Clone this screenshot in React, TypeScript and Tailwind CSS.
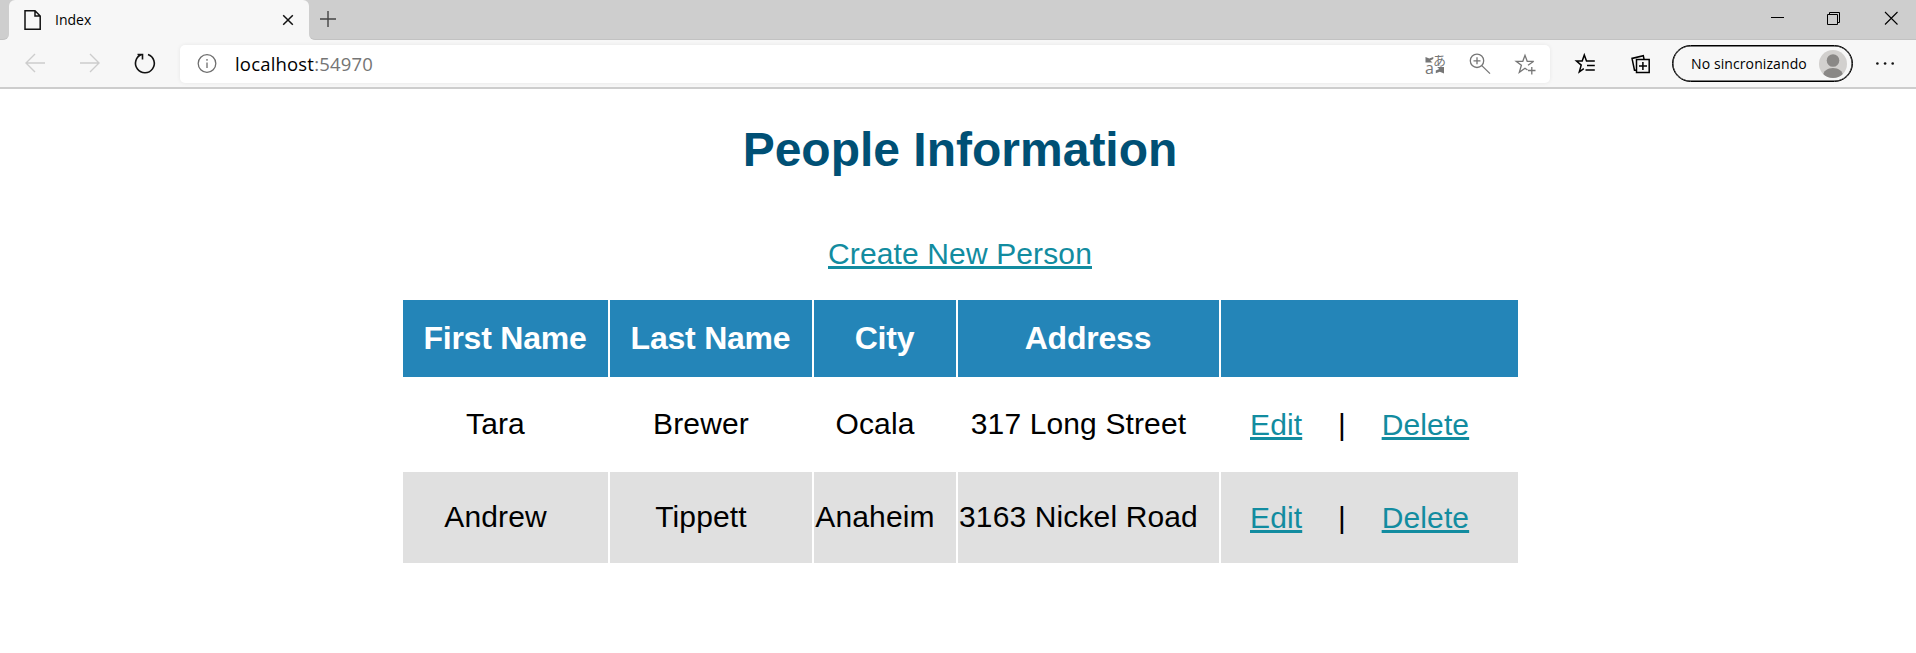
import React from "react";

const people = [
  { first: "Tara", last: "Brewer", city: "Ocala", address: "317 Long Street" },
  { first: "Andrew", last: "Tippett", city: "Anaheim", address: "3163 Nickel Road" },
];

function TabStrip() {
  return (
    <div className="flex h-10 bg-[#f7f7f7]">
      <div className="w-[9px] rounded-br-[6px] border-b border-[#c2c2c2] bg-[#cecece]" />
      <div className="flex w-[300px] items-center bg-[#cecece]">
        <div className="flex h-10 w-full items-center rounded-t-[6px] bg-[#f7f7f7] pl-[14px]">
          <svg width="20" height="22" viewBox="0 0 20 22" fill="none" stroke="#111" strokeWidth="1.5">
            <path d="M2 1.8h10l5.2 5.2v13.2H2zM12 2v5h5" />
          </svg>
          <span className="ml-3 w-[227px] -translate-y-px text-[14px] text-black">Index</span>
          <svg width="12" height="12" viewBox="0 0 12 12" stroke="#111" strokeWidth="1.5">
            <path d="M1.200 1.200l9.600 9.600M10.800 1.200l-9.600 9.600" />
          </svg>
        </div>
      </div>
      <div className="flex grow justify-between rounded-bl-[6px] border-b border-[#c2c2c2] bg-[#cecece]">
        <svg className="ml-[10px] mt-[10px]" width="18" height="18" viewBox="0 0 18 18" stroke="#444" strokeWidth="1.400">
          <path d="M1 9h16M9 1v16" />
        </svg>
        <svg width="160" height="39" viewBox="1756 0 160 39" fill="none" stroke="#000">
          <path d="M1771 17.500h13" />
          <path d="M1827.500 14.500h10v10h-10zM1829.500 14.500v-2h10v10h-2" />
          <path d="M1885 12l12.500 12.500M1897.500 12L1885 24.500" strokeWidth="1.100" />
        </svg>
      </div>
    </div>
  );
}

function Toolbar() {
  return (
    <div className="flex h-[49px] items-start border-b-2 border-[#cdcdcd] bg-[#f7f7f7] pt-[5px]">
      <svg width="180" height="38" viewBox="0 45 180 38" fill="none">
        <g stroke="#cdcdcd" strokeWidth="1.400">
          <path d="M45 63H26M35 54l-9 9 9 9" />
          <path d="M80 63h19M90 54l9 9-9 9" />
        </g>
        <path d="M148 54.500A9.400 9.400 0 1 1 141.500 54.600M137.500 54.500h5v5" stroke="#111" strokeWidth="1.600" />
      </svg>
      <div className="flex h-[38px] w-[1370px] items-center justify-between rounded-[5px] bg-white shadow-[0_0_4px_rgba(0,0,0,0.07)]">
        <div className="flex items-center">
          <svg className="ml-[17px]" width="20" height="20" viewBox="0 0 20 20" fill="none" stroke="#6e6e6e" strokeWidth="1.300">
            <circle cx="10" cy="9.500" r="8.800" />
            <path d="M10 8.500v5.500M10 5v1.800" />
          </svg>
          <span className="ml-[18px] whitespace-nowrap text-[18.500px] tracking-[0.180px] text-black">
            localhost<span className="text-[#757575]">:54970</span>
          </span>
        </div>
        <svg width="130" height="38" viewBox="1420 45 130 38" fill="none" stroke="#767676" strokeWidth="1.300">
          <text x="1433" y="65" fontSize="13" fill="#767676" stroke="none" className="font-['Noto_Sans_CJK_JP',sans-serif]">あ</text>
          <text x="1425" y="73.500" fontSize="16" fill="#767676" stroke="none">a</text>
          <path d="M1425.500 57v5.500h7l-2.200-2 3-1.500v-2l-4 1.500zM1444 73.500v-6.500h-6.800l2 2-3.400 1.500v2.800l4-1.500z" fill="#767676" stroke="none" />
          <circle cx="1477" cy="60.800" r="6.700" />
          <path d="M1481.800 65.600l8.200 8M1473.500 60.800h7M1477 57.300v7" />
          <path d="M1533.800 61.300h-6.600l-2.200-6-2.200 6h-6.600l5.200 4-2.100 7 5.700-4 2.500 1.700M1528 65.300l5.800-4" />
          <path d="M1528 70.500h7.500M1531.800 67v7.500" />
        </svg>
      </div>
      <svg width="122" height="38" viewBox="1550 45 122 38" fill="none" stroke="#000" strokeWidth="1.500">
        <path d="M1592 61h-5.500l-2.200-6-2.100 6.100h-5.700l4.700 4-1.900 6.800 4.500-3.300M1587 65.500h7.800M1585.500 70h9.300M1586 61h8.800" />
        <path d="M1636.500 59.500h12.700v13h-12.700zM1639 66h8M1642.900 62v8M1644 59l-.700-3.300-11.300 2.700 2.500 11.800h2" />
      </svg>
      <div className="flex h-[37px] w-[181px] items-center justify-between rounded-full border border-black pl-[18px] pr-[5px] shadow-[inset_0_0_0_0.500px_#000]">
        <span className="whitespace-nowrap text-[14px] tracking-[0.100px] text-black">No sincronizando</span>
        <svg width="28" height="28" viewBox="0 0 28 28">
          <clipPath id="avatar-clip"><circle cx="14" cy="14" r="14" /></clipPath>
          <circle cx="14" cy="14" r="14" fill="#d2d0ce" />
          <g clipPath="url(#avatar-clip)" fill="#8a8886">
            <circle cx="14" cy="10.500" r="6.300" />
            <path d="M4 28v-2c0-5 4.500-8 10-8s10 3 10 8v2z" />
          </g>
        </svg>
      </div>
      <svg width="63" height="38" viewBox="1853 45 63 38" fill="#111">
        <circle cx="1877.400" cy="63.500" r="1.300" />
        <circle cx="1885.100" cy="63.500" r="1.300" />
        <circle cx="1892.700" cy="63.500" r="1.300" />
      </svg>
    </div>
  );
}

function TextLink({ children }: { children: React.ReactNode }) {
  return (
    <a href="#" className="text-[#128ca0] underline decoration-[3px] underline-offset-[2px] [text-decoration-skip-ink:none]">
      {children}
    </a>
  );
}

const rowGrid = "grid grid-cols-[205px_202px_142px_261px_297px] gap-x-0.5";

export default function App() {
  return (
    <div className="h-[653px] overflow-hidden bg-white font-['Open_Sans','Noto_Sans',sans-serif]">
      <TabStrip />
      <Toolbar />
      <main className="flex flex-col items-center font-['Liberation_Sans',Arial,sans-serif] text-[30px] text-black">
        <h1 className="mt-[33px] pl-[4px] text-[48px] font-bold leading-[56px] text-[#005075]">People Information</h1>
        <p className="mt-[59px] pl-[4px] leading-[34px] tracking-[0.13px]">
          <TextLink>Create New Person</TextLink>
        </p>
        <table className="ml-[403px] mt-[29px] block w-[1115px] self-start">
          <thead className="block">
            <tr className={rowGrid}>
              {["First Name", "Last Name", "City", "Address", ""].map((label) => (
                <th key={label} className="flex h-[77px] items-center justify-center bg-[#2485b8] pb-[2px] pr-px text-[32px] font-bold leading-[36px] tracking-[-0.220px] text-white">
                  {label}
                </th>
              ))}
            </tr>
          </thead>
          <tbody className="block">
            {people.map((p, i) => (
              <tr key={p.first} className={`${rowGrid} ${i === 0 ? "h-[95px] pt-[2px]" : "h-[91px]"}`}>
                {[p.first, p.last, p.city, p.address].map((value) => (
                  <td key={value} className={`flex h-[91px] items-center justify-center whitespace-nowrap pb-[2px] pr-[20px] leading-[34px] tracking-[0.13px] ${i === 1 ? "bg-[#e0e0e0]" : ""}`}>
                    {value}
                  </td>
                ))}
                <td className={`flex h-[91px] items-center pl-[29px] leading-[34px] tracking-[0.13px] ${i === 1 ? "bg-[#e0e0e0]" : ""}`}>
                  <TextLink>Edit</TextLink>
                  <span className="mx-[35.750px]">|</span>
                  <TextLink>Delete</TextLink>
                </td>
              </tr>
            ))}
          </tbody>
        </table>
      </main>
    </div>
  );
}
